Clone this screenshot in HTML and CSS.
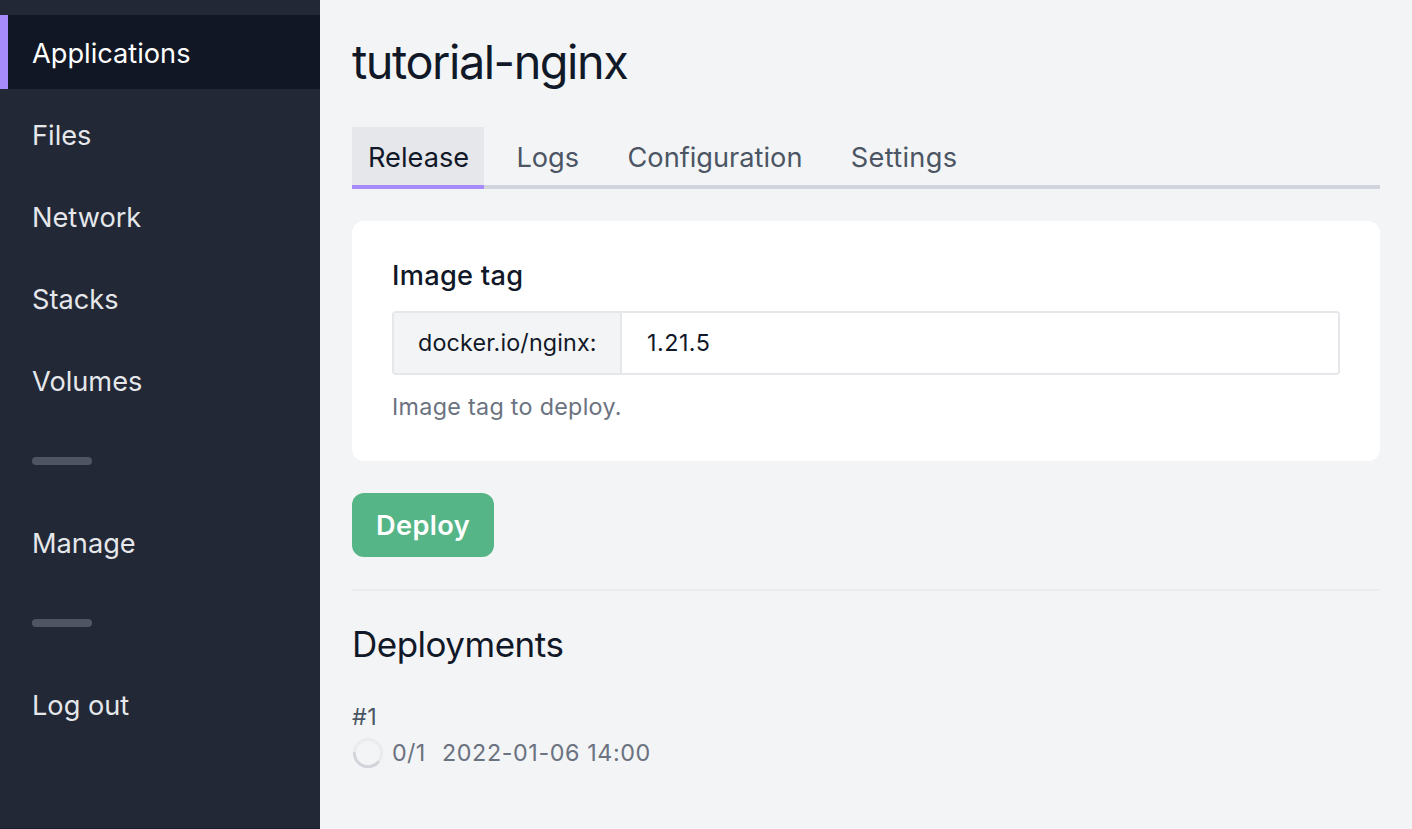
FILE: index.html
```html
<!DOCTYPE html>
<html lang="en">
<head>
<meta charset="utf-8">
<title>tutorial-nginx</title>
<link rel="stylesheet" href="styles.css">
</head>
<body>
<div class="app">
  <nav class="sidebar">
    <a class="nav-item nav-item-active">Applications</a>
    <a class="nav-item">Files</a>
    <a class="nav-item">Network</a>
    <a class="nav-item">Stacks</a>
    <a class="nav-item">Volumes</a>
    <div class="nav-separator"></div>
    <a class="nav-item">Manage</a>
    <div class="nav-separator"></div>
    <a class="nav-item">Log out</a>
  </nav>
  <main class="content">
    <h1 class="title">tutorial-nginx</h1>
    <div class="tabs">
      <a class="tab tab-active">Release</a>
      <a class="tab">Logs</a>
      <a class="tab">Configuration</a>
      <a class="tab tab-settings">Settings</a>
    </div>
    <section class="card">
      <label class="field-label" for="tag">Image tag</label>
      <div class="field">
        <span class="field-prefix">docker.io/nginx:</span>
        <input class="field-input" id="tag" type="text" value="1.21.5">
      </div>
      <p class="field-help">Image tag to deploy.</p>
    </section>
    <button class="deploy" type="button">Deploy</button>
    <hr class="divider">
    <h2 class="subtitle">Deployments</h2>
    <div class="deployment">
      <div class="deployment-id">#1</div>
      <div class="deployment-status">
        <svg class="spinner" viewBox="0 0 32 32" width="32" height="32" fill="none" stroke-width="3">
          <circle cx="16" cy="16" r="13.6" stroke="#ebebeb"/>
          <path d="M2.4 15.2A13.6 13.6 0 0 0 26.8 24.3" stroke="#d1d5db"/>
        </svg>
        <span class="count">0/1</span>
        <span class="date">2022-01-06 14:00</span>
      </div>
    </div>
  </main>
</div>
</body>
</html>
```
FILE: styles.css
```css
* { box-sizing: border-box; }
body {
  margin: 0;
  font-family: Inter, "Liberation Sans", sans-serif;
  font-size: 27.2px;
  color: #111827;
  background: #f3f4f6;
}
.app { display: flex; height: 829px; overflow: hidden; }
.sidebar {
  display: flex;
  flex: none;
  flex-direction: column;
  gap: 8px;
  width: 320px;
  padding-top: 15px;
  background: #222836;
  border-bottom: 1px solid #1c1d2e;
}
.nav-item {
  flex: none;
  height: 74px;
  padding: 2px 0 0 24px;
  border-left: 8px solid transparent;
  line-height: 74px;
  color: #e5e7eb;
}
.nav-item-active {
  background: #111725;
  border-left-color: #a78bfa;
  color: #fff;
}
.nav-separator {
  flex: none;
  width: 60px;
  height: 8px;
  margin: 32px 0 32px 32px;
  border-radius: 4px;
  background: #4f5563;
}
.content { flex: 1; padding: 33px 32px 0; }
.title {
  height: 58px;
  margin: 0 0 36px;
  font-size: 46.8px;
  font-weight: 400;
  line-height: 58px;
  letter-spacing: -1.45px;
}
.tabs {
  display: flex;
  gap: 16.4px;
  height: 62px;
  box-shadow: inset 0 -4px #d1d5db;
}
.tab {
  height: 62px;
  padding: 2px 16px 0;
  line-height: 58px;
  color: #4b5563;
}
.tab-active {
  width: 132px;
  background: #e5e7eb;
  border-bottom: 4px solid #a78bfa;
  color: #111827;
}
.tab-settings { letter-spacing: 0.3px; }
.card {
  height: 240px;
  margin-top: 32px;
  padding: 35px 40px 0;
  border-radius: 12px;
  background: #fff;
}
.field-label {
  display: block;
  height: 40px;
  font-weight: 500;
  line-height: 40px;
  letter-spacing: 0.3px;
}
.field {
  display: flex;
  height: 64px;
  margin-top: 15px;
  border: 2px solid #e5e7eb;
  border-radius: 4px;
  overflow: hidden;
  font-size: 23.3px;
  letter-spacing: 0.15px;
}
.field-prefix {
  width: 228px;
  padding-left: 24px;
  border-right: 2px solid #e5e7eb;
  background: #f3f4f6;
  line-height: 60px;
}
.field-input {
  flex: 1;
  padding: 0 25px 1px;
  border: 0;
  background: #fff;
  color: #111827;
  font: inherit;
  letter-spacing: 0.5px;
}
.field-help {
  margin: 16px 0 0;
  font-size: 23.3px;
  line-height: 32px;
  letter-spacing: 0.3px;
  color: #6b7280;
}
.deploy {
  display: block;
  width: 142px;
  height: 64px;
  margin-top: 32px;
  padding: 2px 0 0;
  border: 0;
  border-radius: 12px;
  background: #56b587;
  color: #fff;
  font: 600 27.2px/62px Inter, "Liberation Sans", sans-serif;
  letter-spacing: 0.4px;
}
.divider {
  height: 2px;
  margin: 32px 0 0;
  border: 0;
  background: #ebecee;
}
.subtitle {
  margin: 29px 0 0;
  font-size: 35px;
  font-weight: 400;
  line-height: 48px;
  letter-spacing: -0.5px;
}
.deployment { margin-top: 31px; font-size: 23.3px; line-height: 36px; }
.deployment-id { color: #4b5563; letter-spacing: 0.5px; }
.deployment-status { display: flex; align-items: center; color: #6b7280; }
.spinner { flex: none; margin-right: 8px; }
.count { width: 50px; letter-spacing: 0.3px; }
.date { letter-spacing: 0.6px; }
```
